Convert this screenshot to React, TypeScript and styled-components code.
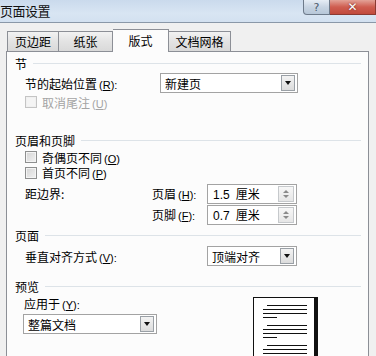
import React from "react";
import styled, { createGlobalStyle, css } from "styled-components";

const Global = createGlobalStyle`
  html, body { margin: 0; padding: 0; background: #f0f0f0; }
  body { font-family: "Noto Sans CJK SC", "Liberation Sans", sans-serif; font-size: 12px; color: #000; }
  * { box-sizing: border-box; }
`;

const Window = styled.div`
  width: 376px;
  height: 356px;
  overflow: hidden;
  background: #f0f0f0;
  display: flex;
  flex-direction: column;
`;

const TitleBar = styled.div`
  height: 23px;
  flex: none;
  display: flex;
  justify-content: space-between;
  align-items: flex-start;
  background: linear-gradient(#cadaec, #d8e5f3 60%, #d3e1f0);
  border-bottom: 1px solid #8a98a8;
`;

const Title = styled.div`
  font-size: 13px;
  line-height: 22px;
  letter-spacing: -0.5px;
  color: #111;
`;

const Caption = styled.div`
  display: flex;
`;

const CapBtn = styled.div<{ $close?: boolean }>`
  height: 15px;
  display: flex;
  align-items: center;
  justify-content: center;
  border: 1px solid #6d7a8a;
  border-top: none;
  font-family: "DejaVu Sans", sans-serif;
  ${(p) =>
    p.$close
      ? css`
          width: 46px;
          background: linear-gradient(#e3a297, #cf5d50 50%, #c14a3c);
          border-color: #8a3a32;
          border-left: none;
          color: #fff;
          font-size: 12px;
          font-weight: bold;
          text-shadow: 0 0 2px #5a1a14;
        `
      : css`
          width: 27px;
          border-bottom-left-radius: 4px;
          background: linear-gradient(#e6edf5, #c7d4e2 50%, #b7c7d8);
          color: #4a5a6c;
          font-size: 11px;
        `}
`;

const Body = styled.div`
  flex: 1;
  padding: 6px 7px 0 6px;
  display: flex;
  flex-direction: column;
`;

const TabRow = styled.div`
  display: flex;
  align-items: flex-end;
  height: 23px;
  padding-left: 1px;
  position: relative;
  z-index: 1;
  margin-bottom: -1px;
`;

const Tab = styled.div<{ $w: number; $active?: boolean }>`
  width: ${(p) => p.$w}px;
  display: flex;
  align-items: center;
  justify-content: center;
  border: 1px solid #8c8f96;
  border-bottom: none;
  font-size: 12px;
  ${(p) =>
    p.$active
      ? css`
          height: 23px;
          background: #fcfcfc;
          padding-bottom: 1px;
        `
      : css`
          height: 21px;
          background: linear-gradient(#f2f2f2, #e3e3e3 50%, #d9d9d9);
          border-bottom: 1px solid #8c8f96;
          & + & { border-left: none; }
        `}
`;

const Panel = styled.div`
  flex: 1;
  background: #fcfcfc;
  border: 1px solid #8c8f96;
  border-bottom: none;
  padding: 4px 7px 0 8px;
  display: flex;
  flex-direction: column;
`;

const SectionTitle = styled.div<{ $mt: number }>`
  display: flex;
  align-items: center;
  height: 14px;
  margin-top: ${(p) => p.$mt}px;
  gap: 6px;
  &::after {
    content: "";
    flex: 1;
    height: 1px;
    background: #dde3e8;
  }
`;

const Row = styled.div<{ $h: number; $mt?: number }>`
  display: flex;
  align-items: center;
  height: ${(p) => p.$h}px;
  margin-top: ${(p) => p.$mt ?? 0}px;
  padding-left: 10px;
`;

const Label = styled.span<{ $w?: number; $disabled?: boolean }>`
  flex: none;
  width: ${(p) => (p.$w ? `${p.$w}px` : "auto")};
  color: ${(p) => (p.$disabled ? "#a4a4a4" : "#000")};
  white-space: nowrap;
`;

const Key = styled.span`
  font-family: "Liberation Sans", sans-serif;
  font-size: 11px;
  text-decoration: underline;
`;

const Paren = styled.span`
  font-family: "Liberation Sans", sans-serif;
  font-size: 11px;
  margin-left: 2px;
`;

const Box = styled.span<{ $disabled?: boolean }>`
  width: 12px;
  height: 12px;
  flex: none;
  margin-right: 5px;
  border: 1px solid ${(p) => (p.$disabled ? "#c4c4c4" : "#8e8f8f")};
  background: ${(p) =>
    p.$disabled ? "#f4f4f4" : "linear-gradient(135deg, #d4d4d4, #f2f2f2)"};
  box-shadow: inset 0 0 0 1px ${(p) => (p.$disabled ? "#f0f0f0" : "#f4f4f4")};
`;

const Select = styled.div<{ $w: number }>`
  width: ${(p) => p.$w}px;
  height: 20px;
  border: 1px solid #a3a3a3;
  background: #fff;
  display: flex;
  align-items: center;
  padding: 1px;
`;

const SelectText = styled.span`
  flex: 1;
  padding-left: 3px;
  white-space: nowrap;
`;

const ArrowBtn = styled.span`
  width: 14px;
  height: 16px;
  flex: none;
  margin-right: 1px;
  border: 1px solid #9aa0a6;
  background: linear-gradient(#f3f3f3, #dcdcdc);
  display: flex;
  align-items: center;
  justify-content: center;
  &::after {
    content: "";
    border-left: 3px solid transparent;
    border-right: 3px solid transparent;
    border-top: 4px solid #111;
  }
`;

const SpinText = styled.span`
  flex: 1;
  padding-left: 4px;
  font-family: "Liberation Sans", "Noto Sans CJK SC", sans-serif;
  white-space: nowrap;
  & > b {
    font-weight: normal;
    font-family: "Noto Sans CJK SC", sans-serif;
    margin-left: 6px;
  }
`;

const SpinBtn = styled.span`
  width: 16px;
  height: 16px;
  flex: none;
  margin-right: 1px;
  border: 1px solid #c6c9cc;
  background: linear-gradient(#f7f7f7, #e6e6e6);
  display: flex;
  flex-direction: column;
  align-items: center;
  justify-content: center;
  gap: 2px;
  &::before {
    content: "";
    border-left: 3px solid transparent;
    border-right: 3px solid transparent;
    border-bottom: 3px solid #8a8a8a;
  }
  &::after {
    content: "";
    border-left: 3px solid transparent;
    border-right: 3px solid transparent;
    border-top: 3px solid #8a8a8a;
  }
`;

const Preview = styled.div`
  display: flex;
  margin-top: 2px;
`;

const PreviewLeft = styled.div`
  display: flex;
  flex-direction: column;
  gap: 2px;
  width: 145px;
  padding-left: 9px;
`;

const ApplySelect = styled(Select)`
  margin-left: -1px;
`;

const Page = styled.div`
  margin-left: 93px;
  margin-top: 2px;
  width: 65px;
  height: 80px;
  border: 1px solid #111;
  border-right: 4px solid #111;
  background: #fff;
  padding: 7px 9px 0 9px;
  display: flex;
  flex-direction: column;
`;

const Para = styled.div`
  display: flex;
  flex-direction: column;
  gap: 3px;
  margin-bottom: 7px;
`;

const TextLine = styled.div<{ $short?: boolean; $indent?: boolean }>`
  height: 1px;
  background: #111;
  width: ${(p) => (p.$short ? "14px" : p.$indent ? "40px" : "44px")};
  margin-left: ${(p) => (p.$indent ? "4px" : "0")};
`;

const Acc = ({ k }: { k: string }) => (
  <Paren>
    (<Key>{k}</Key>):
  </Paren>
);

const Check = ({
  label,
  k,
  disabled,
  h = 15,
  mt = 0,
}: {
  label: string;
  k: string;
  disabled?: boolean;
  h?: number;
  mt?: number;
}) => (
  <Row $h={h} $mt={mt}>
    <Box $disabled={disabled} />
    <Label $disabled={disabled}>
      {label}
      <Paren>
        (<Key>{k}</Key>)
      </Paren>
    </Label>
  </Row>
);

const Paragraph = () => (
  <Para>
    <TextLine $indent />
    <TextLine />
    <TextLine />
    <TextLine $short />
  </Para>
);

export default function App() {
  return (
    <>
      <Global />
      <Window>
        <TitleBar>
          <Title>页面设置</Title>
          <Caption>
            <CapBtn>?</CapBtn>
            <CapBtn $close>✕</CapBtn>
          </Caption>
        </TitleBar>
        <Body>
          <TabRow>
            <Tab $w={52}>页边距</Tab>
            <Tab $w={54}>纸张</Tab>
            <Tab $w={56} $active>
              版式
            </Tab>
            <Tab $w={62}>文档网格</Tab>
          </TabRow>
          <Panel>
            <SectionTitle $mt={0}>节</SectionTitle>
            <Row $h={22} $mt={2}>
              <Label $w={135}>
                节的起始位置
                <Acc k="R" />
              </Label>
              <Select $w={138}>
                <SelectText>新建页</SelectText>
                <ArrowBtn />
              </Select>
            </Row>
            <Check label="取消尾注" k="U" disabled h={16} />

            <SectionTitle $mt={23}>页眉和页脚</SectionTitle>
            <Check label="奇偶页不同" k="O" h={16} mt={2} />
            <Check label="首页不同" k="P" />
            <Row $h={21} $mt={3}>
              <Label $w={127}>距边界:</Label>
              <Label $w={55}>
                页眉
                <Acc k="H" />
              </Label>
              <Select $w={90}>
                <SpinText>
                  1.5<b>厘米</b>
                </SpinText>
                <SpinBtn />
              </Select>
            </Row>
            <Row $h={21}>
              <Label $w={127} />
              <Label $w={55}>
                页脚
                <Acc k="F" />
              </Label>
              <Select $w={90}>
                <SpinText>
                  0.7<b>厘米</b>
                </SpinText>
                <SpinBtn />
              </Select>
            </Row>

            <SectionTitle $mt={3}>页面</SectionTitle>
            <Row $h={22} $mt={3}>
              <Label $w={182}>
                垂直对齐方式
                <Acc k="V" />
              </Label>
              <Select $w={90}>
                <SelectText>顶端对齐</SelectText>
                <ArrowBtn />
              </Select>
            </Row>

            <SectionTitle $mt={12}>预览</SectionTitle>
            <Preview>
              <PreviewLeft>
                <Label>
                  应用于
                  <Acc k="Y" />
                </Label>
                <ApplySelect $w={134}>
                  <SelectText>整篇文档</SelectText>
                  <ArrowBtn />
                </ApplySelect>
              </PreviewLeft>
              <Page>
                <Paragraph />
                <Paragraph />
                <Paragraph />
              </Page>
            </Preview>
          </Panel>
        </Body>
      </Window>
    </>
  );
}
